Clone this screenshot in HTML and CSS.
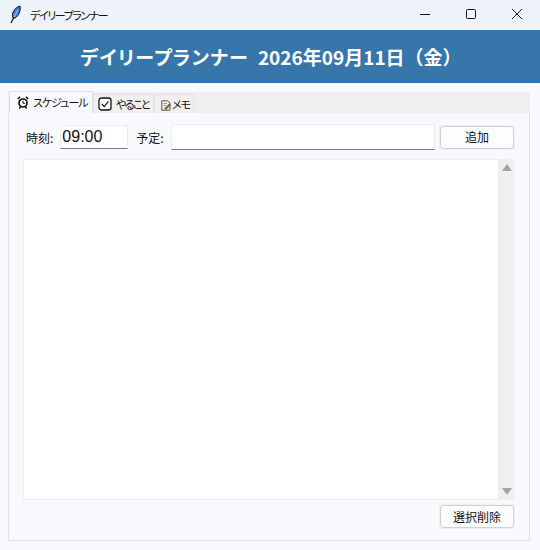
FILE: index.html
```html
<!DOCTYPE html>
<html lang="ja">
<head>
<meta charset="utf-8">
<title>デイリープランナー</title>
<link rel="stylesheet" href="styles.css">
</head>
<body>
<div class="window">
  <div class="titlebar">
    <svg class="feather" viewBox="0 0 16 20" width="16" height="20">
      <path d="M3 18 L6 12" stroke="#111" stroke-width="1.2" fill="none"/>
      <path d="M5 13 C3 9 6 3 12 1 C13 5 11 11 7 13 Z" fill="#3f7fd8" stroke="#111" stroke-width="1"/>
      <path d="M6 12 L10 5" stroke="#bcd6f5" stroke-width="0.8" fill="none"/>
    </svg>
    <span class="wintitle">デイリープランナー</span>
    <div class="winbtns">
      <svg class="winbtn" viewBox="0 0 46 30" width="46" height="30"><path d="M18 14.5 H28" stroke="#111" stroke-width="1" fill="none"/></svg>
      <svg class="winbtn" viewBox="0 0 46 30" width="46" height="30"><rect x="18.5" y="9.5" width="9" height="9" rx="1" stroke="#111" stroke-width="1" fill="none"/></svg>
      <svg class="winbtn" viewBox="0 0 46 30" width="46" height="30"><path d="M18 9 L28 19 M28 9 L18 19" stroke="#222" stroke-width="1" fill="none"/></svg>
    </div>
  </div>
  <header class="banner"><span class="kana">デイリープランナー</span><span class="date">2026年09月11日（金）</span></header>
  <main class="notebook">
    <div class="tabs">
      <div class="tab active">
        <svg viewBox="0 0 12 13" width="12" height="13"><circle cx="6" cy="7" r="4" fill="#fff" stroke="#111" stroke-width="1.7"/><path d="M6 4.8 V7.3 H8" stroke="#111" fill="none"/><path d="M.8 3 L3 .9 M11.2 3 L9 .9 M2.4 12.6 L3.4 10.8 M9.6 12.6 L8.6 10.8" stroke="#111" stroke-width="1.5" fill="none"/></svg>
        <span>スケジュール</span>
      </div>
      <div class="tab second">
        <svg viewBox="0 0 14 14" width="14" height="14"><rect x="1" y="1" width="12" height="12" rx="2.5" fill="#fff" stroke="#111" stroke-width="1.3"/><path d="M3.8 7 L6.2 9.6 L10.4 4.4" stroke="#111" stroke-width="1.2" fill="none"/></svg>
        <span>やること</span>
      </div>
      <div class="tab third">
        <svg viewBox="0 0 10 11" width="10" height="11"><path d="M.8 .8 H6.5 L9 3 V10.2 H.8 Z" fill="#eee" stroke="#555" stroke-width="1"/><path d="M2.5 3.5 H6 M2.5 5.5 H5" stroke="#888" stroke-width=".8"/><path d="M3.5 8.5 L8 4 L9.5 5.3 L5 9.5 Z" fill="#b5651d" stroke="#444" stroke-width=".5"/></svg>
        <span>メモ</span>
      </div>
    </div>
    <section class="panel">
      <div class="inputrow">
        <label class="lbl first">時刻:</label>
        <div class="field time">09:00</div>
        <label class="lbl">予定:</label>
        <div class="field plan"></div>
        <div class="btnwrap"><button class="btn">追加</button></div>
      </div>
      <div class="listarea">
        <div class="listbox"></div>
        <div class="scrollbar">
          <span class="arrow up"></span>
          <span class="arrow down"></span>
        </div>
      </div>
      <div class="bottomrow"><div class="btnwrap"><button class="btn">選択削除</button></div></div>
    </section>
  </main>
</div>
</body>
</html>
```
FILE: styles.css
```css
* { box-sizing: border-box; }
html, body { margin: 0; padding: 0; }
body {
  width: 540px;
  height: 550px;
  overflow: hidden;
  background: #f7f9fd;
  font-family: "Noto Sans CJK JP", "Noto Sans", sans-serif;
  color: #111;
}
.window { display: flex; flex-direction: column; height: 550px; }
.titlebar {
  height: 30px;
  background: #eef2fa;
  display: flex;
  align-items: center;
  padding-left: 8px;
}
.feather { flex: none; }
.wintitle {
  font-size: 11px;
  letter-spacing: -1.4px;
  margin-left: 6px;
  color: #111;
  font-feature-settings: "palt" 1;
  white-space: nowrap;
}
.winbtns { margin-left: auto; display: flex; }
.winbtn { display: block; }
.banner {
  height: 53px;
  background: #3776ab;
  color: #fff;
  font-size: 19px;
  font-weight: 700;
  display: flex;
  align-items: center;
  justify-content: center;
  gap: 9px;
  padding-left: 2px;
  white-space: nowrap;
}
.kana { font-feature-settings: "palt" 1; letter-spacing: 1.3px; }
.notebook {
  flex: none;
  margin: 9px 10px 0 8px;
  height: 449px;
  display: flex;
  flex-direction: column;
}
.tabs {
  display: flex;
  height: 21px;
  background: #efefef;
  align-items: flex-end;
  position: relative;
  z-index: 1;
  padding-left: 1px;
  margin-bottom: -1px;
}
.tab {
  display: flex;
  align-items: center;
  font-size: 11px;
  letter-spacing: -1px;
  height: 19px;
  background: #f0f0f0;
  border: 1px solid #e4e4e4;
  border-bottom: none;
  line-height: 1;
  white-space: nowrap;
  font-feature-settings: "palt" 1;
  flex: none;
}
.tab svg { flex: none; }
.tab.active {
  height: 22px;
  width: 84px;
  background: #f7f9fd;
  border-color: #e0e0e0;
  padding-left: 7px;
  gap: 4px;
}
.tab.second { width: 61px; padding-left: 4px; gap: 4px; letter-spacing: -1.6px; }
.tab.third { width: 40px; padding-left: 6px; gap: 1px; }
.tab.third svg { margin-top: 3px; }
.panel {
  flex: 1;
  background: #f7f9fd;
  border: 1px solid #e2e2e2;
  padding: 10px 14px 0 14px;
  display: flex;
  flex-direction: column;
}
.inputrow {
  display: flex;
  align-items: center;
  height: 28px;
  font-size: 12px;
}
.lbl { margin-right: 7px; margin-left: 8px; white-space: nowrap; }
.lbl.first { margin-left: 3px; margin-right: 7px; }
.field {
  background: #fff;
  border: 1px solid #ededed;
  border-bottom: 1px solid #7a7a7a;
  font-family: "Liberation Sans", sans-serif;
  font-size: 16px;
  line-height: 22px;
  padding-left: 1px;
}
.field.time { width: 68px; height: 24px; }
.field.plan { width: 265px; height: 26px; margin-right: 4px; }
.btnwrap {
  padding: 1px;
  background: #f0f0f0;
}
.btn {
  display: block;
  width: 74px;
  height: 23px;
  background: #fdfdfd;
  border: 1px solid #d0d0d0;
  border-radius: 4px;
  font-family: inherit;
  font-size: 12px;
  color: #111;
  padding: 0;
  line-height: 1;
}
.listarea {
  display: flex;
  height: 341px;
  margin-top: 8px;
}
.listbox {
  flex: 1;
  background: #fff;
  border: 1px solid #ededed;
}
.scrollbar {
  width: 16px;
  background: #efefef;
  display: flex;
  flex-direction: column;
  justify-content: space-between;
  align-items: center;
  padding: 5px 0;
}
.arrow { width: 0; height: 0; border-left: 5px solid transparent; border-right: 5px solid transparent; }
.arrow.up { border-bottom: 7px solid #a3a3a3; }
.arrow.down { border-top: 7px solid #a3a3a3; }
.bottomrow {
  display: flex;
  justify-content: flex-end;
  margin-top: 4px;
}
```
